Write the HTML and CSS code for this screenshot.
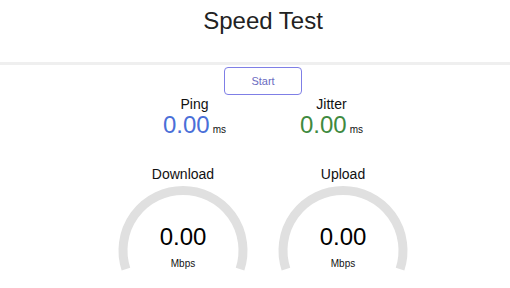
FILE: index.html
```html
<!DOCTYPE html>
<html lang="en">
<head>
  <meta charset="UTF-8">
  <title>Speed Test</title>
  <link rel="stylesheet" href="styles.css">
</head>
<body>

  <header class="top">
    <h1>Speed Test</h1>
  </header>

  <main class="test">
    <button class="start-btn">Start</button>

    <div class="small-row">
      <div class="small-area">
        <div class="label">Ping</div>
        <div class="small-value ping"><span>0.00</span><span class="unit">ms</span></div>
      </div>
      <div class="small-area">
        <div class="label">Jitter</div>
        <div class="small-value jitter"><span>0.00</span><span class="unit">ms</span></div>
      </div>
    </div>

    <div class="gauge-row">
      <div class="gauge-area">
        <div class="label">Download</div>
        <div class="gauge">
          <svg class="meter" width="160" height="92" viewBox="0 0 160 92">
            <path d="M 22.94 86.04 A 60 60 0 1 1 137.06 86.04" />
          </svg>
          <div class="gauge-text">
            <div class="gauge-value">0.00</div>
            <div class="gauge-unit">Mbps</div>
          </div>
        </div>
      </div>
      <div class="gauge-area">
        <div class="label">Upload</div>
        <div class="gauge">
          <svg class="meter" width="160" height="92" viewBox="0 0 160 92">
            <path d="M 22.94 86.04 A 60 60 0 1 1 137.06 86.04" />
          </svg>
          <div class="gauge-text">
            <div class="gauge-value">0.00</div>
            <div class="gauge-unit">Mbps</div>
          </div>
        </div>
      </div>
    </div>
  </main>

</body>
</html>
```

FILE: styles.css
```css
body {
  font-family: "Liberation Sans", Arial, sans-serif;
  margin: 0;
  background: #fff;
  color: #000;
}

.top {
  height: 62px;
  border-bottom: 3px solid #efefef;
  padding-left: 16px;
  text-align: center;
}

.top h1 {
  margin: 0;
  padding-top: 6px;
  font-size: 24px;
  font-weight: normal;
  line-height: 30px;
  color: #222;
}

.test {
  padding-left: 16px;
  display: flex;
  flex-direction: column;
  align-items: center;
}

.start-btn {
  margin-top: 2px;
  width: 78px;
  height: 28px;
  font-family: inherit;
  font-size: 11px;
  color: #6b6bbf;
  background: #fff;
  border: 1.5px solid #7f7fe6;
  border-radius: 4px;
  cursor: pointer;
}

.label {
  font-size: 14px;
  line-height: 16px;
  text-align: center;
  color: #111;
}

.small-row {
  display: flex;
  margin-top: 1px;
}

.small-area {
  width: 137px;
}

.small-value {
  font-size: 24px;
  line-height: 26px;
  text-align: center;
}

.small-value .unit {
  font-size: 10px;
  margin-left: 3px;
  color: #111;
}

.ping { color: #4a6fd8; }
.jitter { color: #3f8a3f; }

.gauge-row {
  display: flex;
  margin-top: 23px;
}

.gauge-area {
  width: 160px;
}

.gauge {
  display: grid;
  margin-top: 1px;
}

.meter,
.gauge-text {
  grid-area: 1 / 1;
}

.meter path {
  fill: none;
  stroke: #e0e0e0;
  stroke-width: 9;
}

.gauge-text {
  padding-top: 41px;
  text-align: center;
}

.gauge-value {
  font-size: 24px;
  line-height: 26px;
}

.gauge-unit {
  margin-top: 8px;
  font-size: 10px;
  line-height: 12px;
  color: #111;
}
```
